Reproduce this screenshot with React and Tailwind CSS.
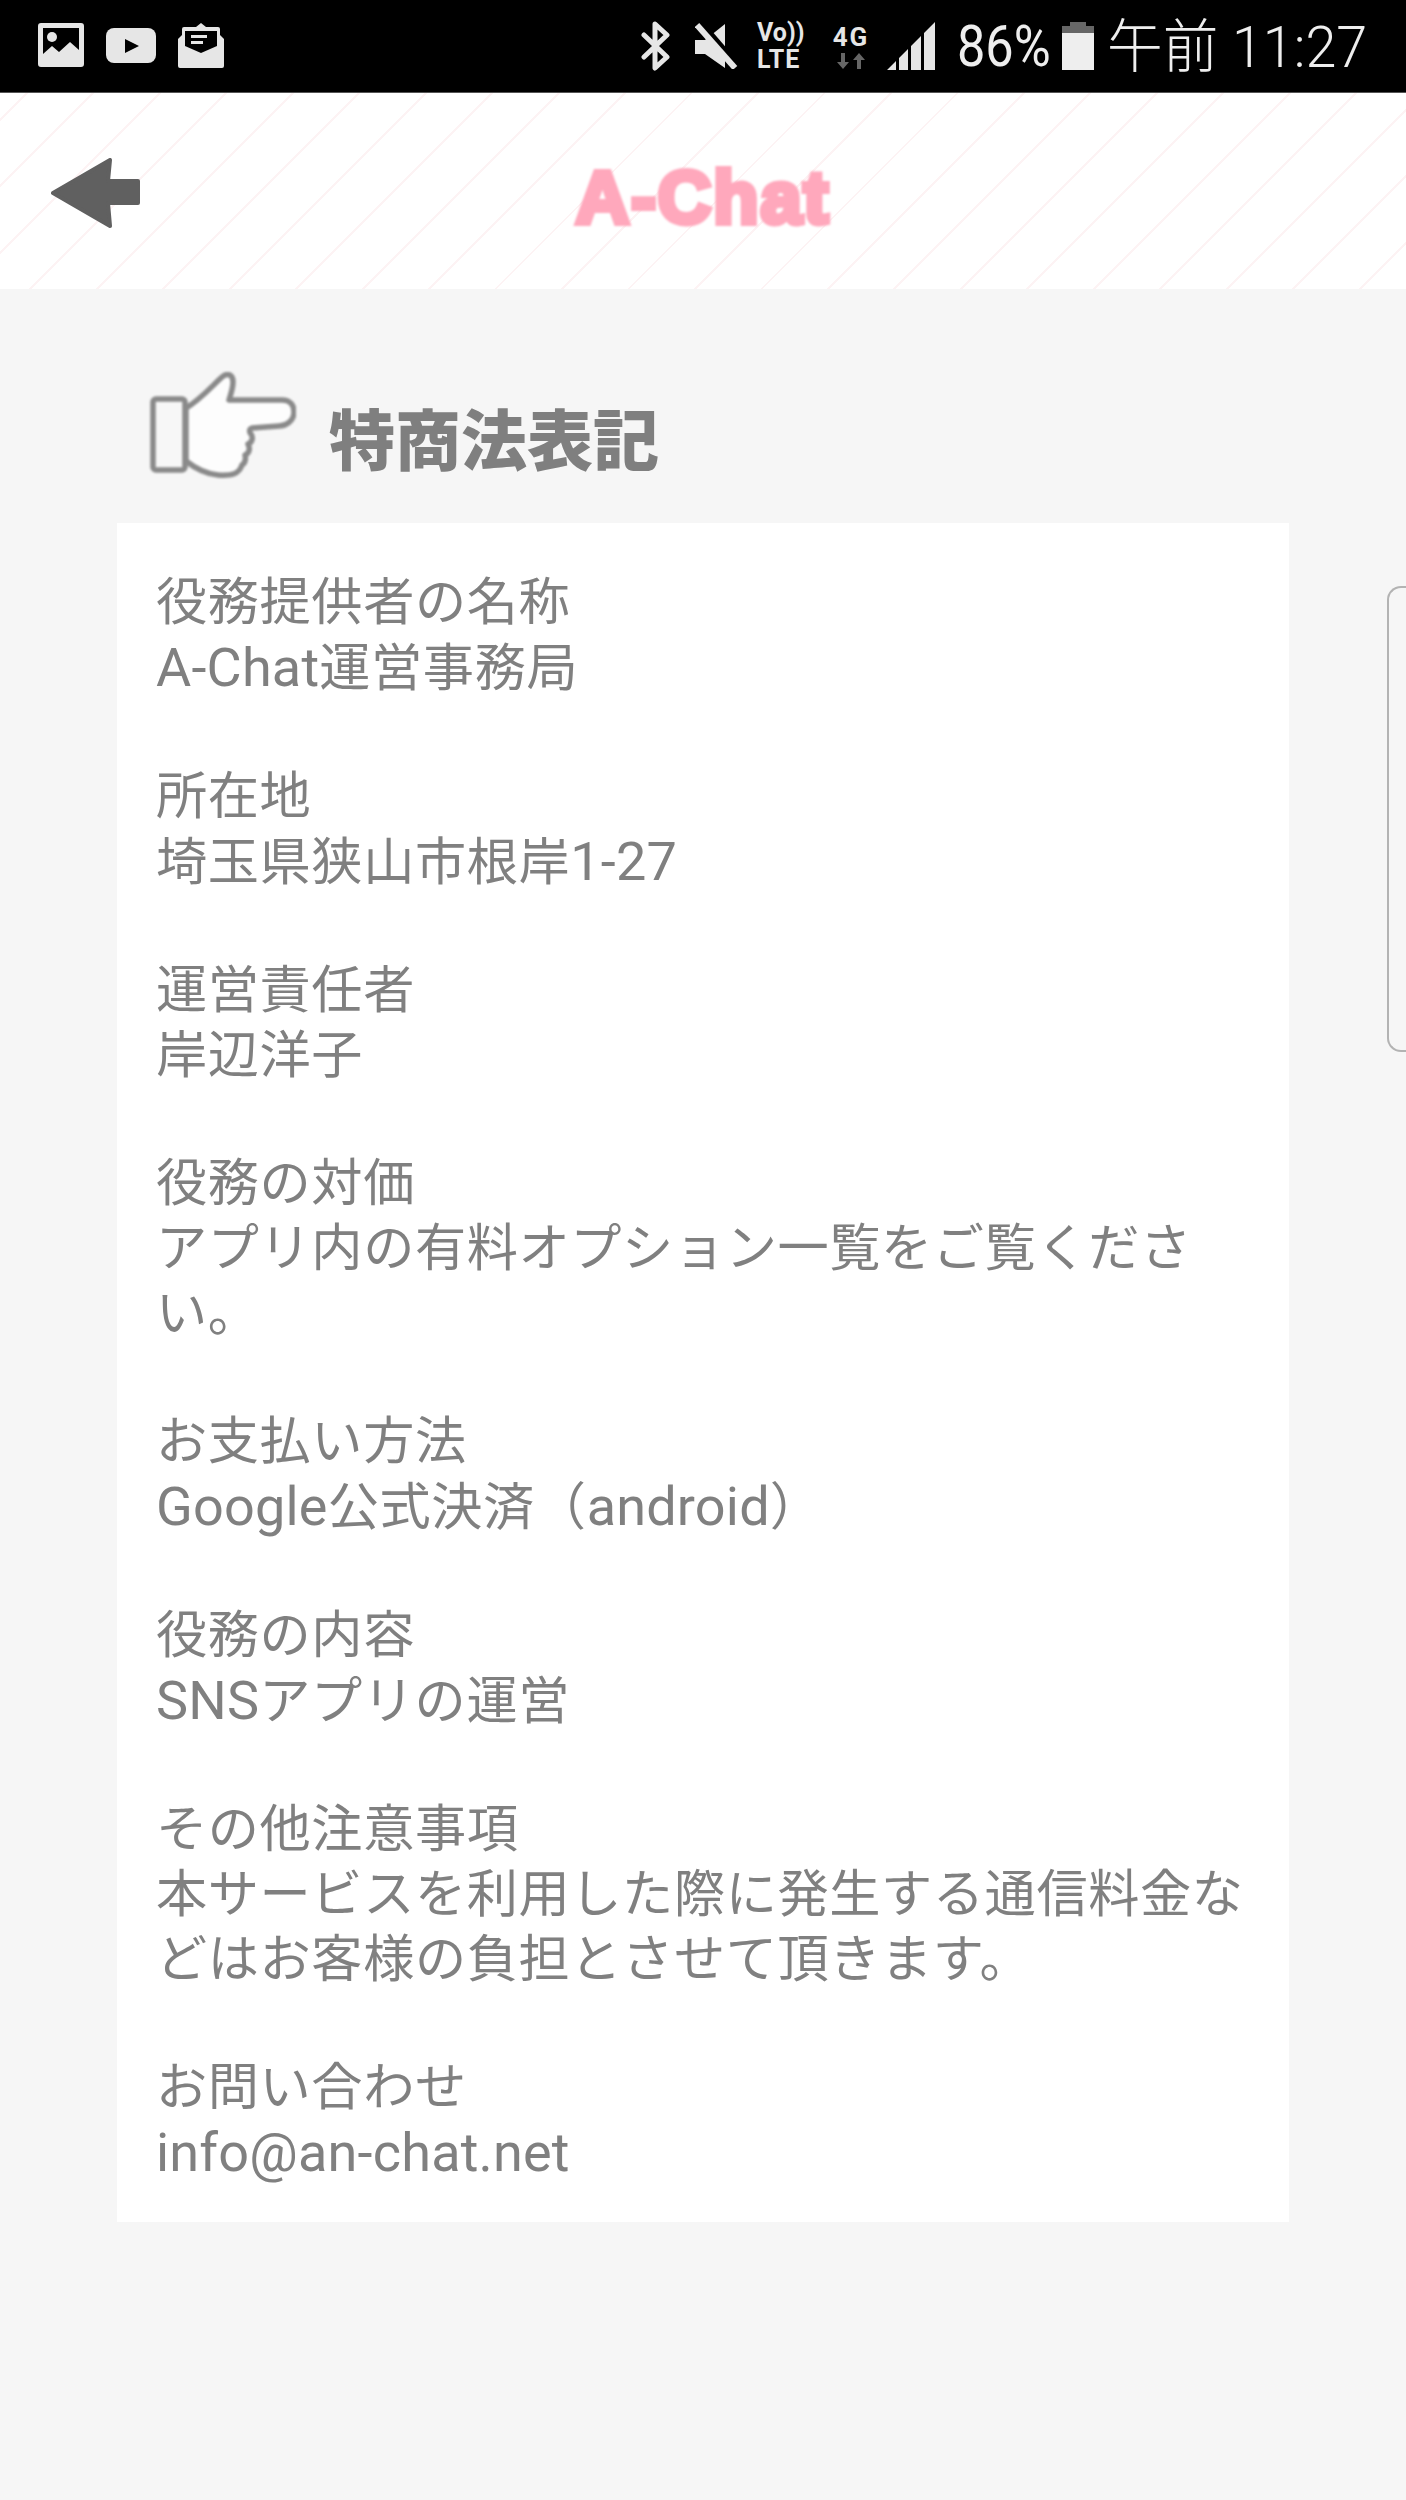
const SECTIONS = [
  { title: '役務提供者の名称', body: 'A-Chat運営事務局' },
  { title: '所在地', body: '埼玉県狭山市根岸1-27' },
  { title: '運営責任者', body: '岸辺洋子' },
  { title: '役務の対価', body: 'アプリ内の有料オプション一覧をご覧ください。' },
  { title: 'お支払い方法', body: 'Google公式決済（android）' },
  { title: '役務の内容', body: 'SNSアプリの運営' },
  { title: 'その他注意事項', body: '本サービスを利用した際に発生する通信料金などはお客様の負担とさせて頂きます。' },
  { title: 'お問い合わせ', body: 'info@an-chat.net' },
];

const FONT = "font-['Roboto','Noto_Sans_CJK_JP',sans-serif]";

// latin runs are a touch bigger than the kana/kanji in the screenshot
const Mixed = ({ text }) =>
  text.split(/([\x21-\x7e]+)/).map((part, i) =>
    i % 2 === 1 ? (
      <span key={i} className="text-[54px] tracking-[0.2px]">
        {part}
      </span>
    ) : (
      part
    )
  );

const StatusLeft = () => (
  <div className="flex items-center gap-[22px] pl-[38px]">
    <svg width="46" height="46" viewBox="0 0 46 46">
      <path fillRule="evenodd" fill="#e6e6e6" d="M3 0h40a3 3 0 0 1 3 3v38a3 3 0 0 1-3 3H3a3 3 0 0 1-3-3V3a3 3 0 0 1 3-3zM5 5v26l9-8 7 6 11-10 9 8V5z" />
      <circle cx="14" cy="14" r="5" fill="#e6e6e6" />
    </svg>
    <svg width="50" height="36" viewBox="0 0 50 36">
      <rect width="50" height="35" rx="8" fill="#e6e6e6" />
      <path d="M19 11l14 7-14 7z" fill="#000" />
    </svg>
    <svg width="46" height="46" viewBox="0 0 46 46">
      <path fill="#e6e6e6" d="M23 0l5 4h12a2 2 0 0 1 2 2v6l4 4v27a2 2 0 0 1-2 2H2a2 2 0 0 1-2-2V16l4-4V6a2 2 0 0 1 2-2h12z" />
      <path fill="#000" d="M7 8h32v15l-16 7-16-7z" />
      <path fill="#e6e6e6" d="M13 12h16v3H13zM13 18h12v3H13z" />
    </svg>
  </div>
);

const StatusRight = () => (
  <div className="flex items-center pr-[41px] text-[#eeeeee]">
    <svg width="31" height="50" viewBox="0 0 31 50" className="mr-[24px]" fill="none" stroke="#e6e6e6" strokeWidth="5" strokeLinejoin="round" strokeLinecap="round">
      <path d="M4 14l23 22-12 11V3l12 11L4 36" />
    </svg>
    <svg width="44" height="46" viewBox="0 0 44 46" className="mr-[18px]">
      <path fill="#e6e6e6" d="M0 17h10L30 1v44L10 31H0z" />
      <path d="M6 0l38 44" stroke="#000" strokeWidth="6" />
      <path d="M2 2l38 43" stroke="#e6e6e6" strokeWidth="6" />
    </svg>
    <div className="font-['Roboto',sans-serif] w-[46px] mr-[29px] flex flex-col font-bold text-[#e6e6e6] leading-none text-[25px] whitespace-nowrap">
      <span>Vo))</span>
      <span className="mt-[2px] tracking-[1px]">LTE</span>
    </div>
    <div className="font-['Roboto',sans-serif] w-[38px] mr-[17px] flex flex-col items-center font-bold leading-none">
      <span className="text-[26px] text-[#e6e6e6] tracking-[2px]">4G</span>
      <svg width="28" height="16" viewBox="0 0 28 16" fill="#666666" className="mt-[3px]">
        <path d="M4 0h4v9h4l-6 7-6-7h4zM20 16h4V7h4l-6-7-6 7h4z" />
      </svg>
    </div>
    <svg width="49" height="48" viewBox="0 0 49 48" fill="#e6e6e6" className="mr-[21px]">
      <path d="M0 48l9-9v9zM12 48V36l9-9v21zM24 48V24l10-10v34zM37 48V11L48 0v48z" />
    </svg>
    <div className="w-[91px] mr-[14px]">
      <span className="block font-['Roboto',sans-serif] text-[58px] leading-none scale-x-[0.87] origin-left whitespace-nowrap">86%</span>
    </div>
    <svg width="32" height="48" viewBox="0 0 32 48" className="mr-[13px]">
      <path fill="#666666" d="M8 0h16v4h8v7H0V4h8z" />
      <rect y="11" width="32" height="37" fill="#eeeeee" />
    </svg>
    <div className="w-[258px] pt-[2px]">
      <span className={`${FONT} block text-[58px] leading-none font-light scale-x-[0.96] origin-left whitespace-nowrap`}>午前 11:27</span>
    </div>
  </div>
);

const BackArrow = () => (
  <svg width="92" height="72" viewBox="0 0 92 72" className="ml-[50px] mt-[3px] blur-[0.6px]">
    <path fill="#606060" stroke="#606060" strokeWidth="4" strokeLinejoin="round" d="M3 36L60 3l-2 21h30v22H58l2 23z" />
  </svg>
);

const PointingHand = () => (
  <svg width="146" height="108" viewBox="0 0 146 108" fill="#fdfdfd" stroke="#8a8a8a" strokeWidth="5.5" strokeLinejoin="round" className="blur-[0.9px]">
    <path d="M36 36C50 28 62 14 72 5c6-5 11-2 11 5 0 6-2 12-4 18h53c8 0 12 5 12 12 0 9-8 14-15 14l-27 2c-3 1-3 4-1 6 2 3 2 8-3 10 2 4 2 9-3 11 1 4 0 8-3 10-3 9-10 11-24 10-11-1-22-6-32-14z" />
    <rect x="3" y="27" width="32" height="71" rx="3" fill="#f7f7f7" />
  </svg>
);

const App = () => {
  return (
    <div className={`${FONT} w-[1406px] h-[2500px] bg-[#f6f6f6] flex flex-col overflow-hidden relative`}>
      <div className="h-[93px] bg-black flex items-center justify-between border-b-[1px] border-[#555555] shrink-0">
        <StatusLeft />
        <StatusRight />
      </div>

      <header className="h-[196px] shrink-0 relative flex items-center bg-[repeating-linear-gradient(135deg,#ffffff_0px,#ffffff_18px,#fdf3f4_18px,#fdf3f4_20px,#ffffff_20px,#ffffff_47px)]">
        <BackArrow />
        <div className="absolute inset-0 flex items-center justify-center pt-[14px]">
          <span className="font-['Liberation_Sans',sans-serif] font-bold text-[74px] leading-none text-[#ffa8bc] blur-[1px] [-webkit-text-stroke:6px_#ffa8bc] tracking-[2px]">A-Chat</span>
        </div>
      </header>

      <div className="flex items-start pl-[150px] pt-[83px] gap-[33px] h-[234px] shrink-0">
        <PointingHand />
        <h1 className="text-[66px] leading-none font-black text-[#7f7f7f] mt-[38px]">特商法表記</h1>
      </div>

      <main className="ml-[117px] w-[1172px] bg-white pl-[39px] pr-[40px] pt-[47px] pb-[36px] leading-[65px] text-[#808080] text-[51.2px] tracking-[0.6px]">
        {SECTIONS.map((s) => (
          <section key={s.title} className="mb-[63px] last:mb-0">
            <p>
              <Mixed text={s.title} />
            </p>
            <p>
              <Mixed text={s.body} />
            </p>
          </section>
        ))}
      </main>

      <div className="absolute top-[586px] right-0 w-[19px] h-[466px] border-l-[2px] border-y-[2px] border-[#b3b3b3] rounded-l-[14px]" />
    </div>
  );
};

export default App;
